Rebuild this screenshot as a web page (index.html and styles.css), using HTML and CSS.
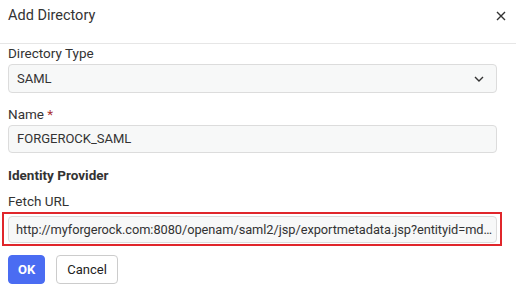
FILE: index.html
```html
<!DOCTYPE html>
<html lang="en">
<head>
    <meta charset="UTF-8">
    <title>Add Directory</title>
    <link rel="stylesheet" href="styles.css">
</head>
<body>
    <div class="dialog">
        <div class="dialog-header">
            <div class="dialog-title">Add Directory</div>
            <svg class="close" width="10" height="10" viewBox="0 0 10 10">
                <path d="M1 1 L9 9 M9 1 L1 9" stroke="#333" stroke-width="1.4" fill="none"/>
            </svg>
        </div>
        <div class="dialog-body">
            <div class="field">
                <div class="label">Directory Type</div>
                <div class="input select">
                    <span>SAML</span>
                    <svg width="10" height="6" viewBox="0 0 10 6">
                        <path d="M1 1 L5 5 L9 1" stroke="#333" stroke-width="1.4" fill="none"/>
                    </svg>
                </div>
            </div>
            <div class="field">
                <div class="label">Name <span class="req">*</span></div>
                <div class="input">FORGEROCK_SAML</div>
            </div>
            <div class="section-title">Identity Provider</div>
            <div class="field">
                <div class="label">Fetch URL</div>
                <div class="highlight">
                    <div class="input url">http://myforgerock.com:8080/openam/saml2/jsp/exportmetadata.jsp?entityid=md…</div>
                </div>
            </div>
            <div class="actions">
                <button class="btn btn-primary">OK</button>
                <button class="btn">Cancel</button>
            </div>
        </div>
    </div>
</body>
</html>
```

FILE: styles.css
```css
body {
    margin: 0;
    background: #fff;
    font-family: Roboto, "Liberation Sans", sans-serif;
    color: #333;
}

.dialog-header {
    display: flex;
    align-items: center;
    justify-content: space-between;
    height: 43px;
    padding: 0 8px 0 8px;
    border-bottom: 1px solid #e6e6e6;
}

.dialog-title {
    font-size: 14.5px;
    margin-top: -12px;
    color: #333;
}

.close {
    margin-top: -12px;
    margin-right: 2px;
}

.dialog-body {
    padding: 0 19px 0 8px;
}

.field {
    margin-bottom: 12px;
}

.label {
    font-size: 13.5px;
    line-height: 18px;
    margin: 0 0 2px 0;
}

.req {
    color: #a33;
}

.input {
    box-sizing: border-box;
    height: 28px;
    padding: 0 8px;
    font-size: 13px;
    line-height: 26px;
    background: #f7f8f8;
    border: 1px solid #dcdcdc;
    border-radius: 4px;
    white-space: nowrap;
    overflow: hidden;
}

.select {
    display: flex;
    align-items: center;
    justify-content: space-between;
    padding-right: 12px;
    height: 29px;
}

.section-title {
    font-size: 13.5px;
    font-weight: bold;
    line-height: 18px;
    margin: 13px 0 8px 0;
}

.highlight {
    border: 2px solid #e0262b;
    padding: 2px 3px 1px 4px;
    margin: 0 -5px 0 -6px;
}

.url {
    height: 27px;
    padding-left: 7px;
    font-size: 12.8px;
    letter-spacing: -0.05px;
}

.actions {
    display: flex;
    gap: 11px;
    margin-top: -3px;
}

.btn {
    font-family: Roboto, "Liberation Sans", sans-serif;
    font-size: 13px;
    height: 29px;
    padding: 0 10px;
    border: 1px solid #ccc;
    border-radius: 4px;
    background: #fff;
    color: #222;
}

.btn-primary {
    background: #4a6cf2;
    border-color: #4a6cf2;
    color: #fff;
    font-weight: bold;
    padding: 0 9px;
}
```
